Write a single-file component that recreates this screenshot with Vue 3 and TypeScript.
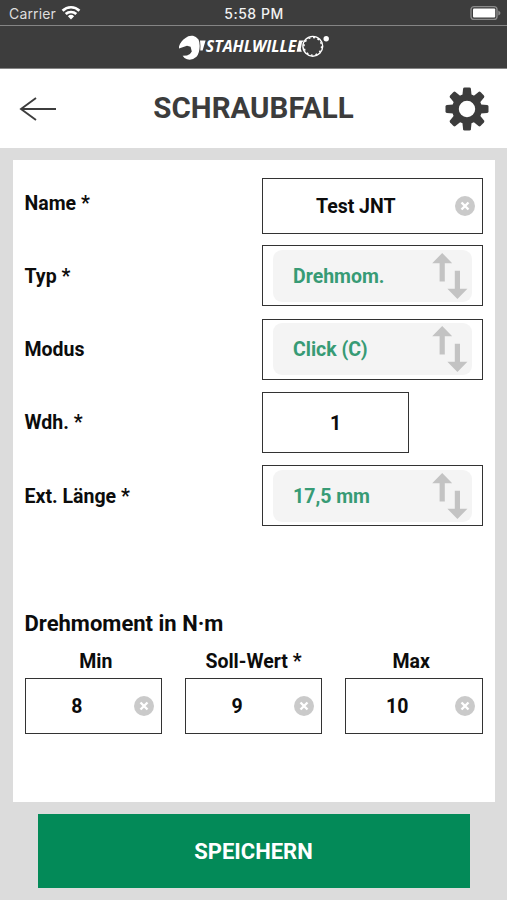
<script setup lang="ts">
interface Field {
  label: string
  value: string
  kind: 'text' | 'select' | 'short'
}

interface Limit {
  label: string
  value: string
}

const fields: Field[] = [
  { label: 'Name *', value: 'Test JNT', kind: 'text' },
  { label: 'Typ *', value: 'Drehmom.', kind: 'select' },
  { label: 'Modus', value: 'Click (C)', kind: 'select' },
  { label: 'Wdh. *', value: '1', kind: 'short' },
  { label: 'Ext. Länge *', value: '17,5 mm', kind: 'select' },
]

const limits: Limit[] = [
  { label: 'Min', value: '8' },
  { label: 'Soll-Wert *', value: '9' },
  { label: 'Max', value: '10' },
]

const teeth: number[] = [0, 45, 90, 135, 180, 225, 270, 315]
</script>

<template>
  <div class="screen">
    <div class="status">
      <div class="carrier">
        <span>Carrier</span>
        <svg class="wifi" width="20" height="16" viewBox="0 0 20 16">
          <g fill="none" stroke="#fff" stroke-width="2.7">
            <path d="M1.6 5.7a12 12 0 0 1 16.8 0" />
            <path d="M4.7 9.1a7.7 7.7 0 0 1 10.6 0" />
          </g>
          <path d="M6.9 11.3a4.5 4.5 0 0 1 6.2 0L10 14.6z" fill="#fff" />
        </svg>
      </div>
      <span class="clock">5:58 PM</span>
      <svg class="battery" width="32" height="16" viewBox="0 0 32 16">
        <rect x="1" y="1.6" width="26" height="12.8" rx="3" fill="#3d3d3d" stroke="#8a8a8a" stroke-width="1.4" />
        <rect x="3" y="3.4" width="22.2" height="9.2" rx="1" fill="#fff" />
        <path d="M28.3 5.5q2.2 1 2.2 2.5t-2.2 2.5z" fill="#8a8a8a" />
      </svg>
    </div>

    <div class="brand">
      <svg width="152" height="28" viewBox="0 0 152 28">
        <path d="M1 11.500Q3 5.500 7.500 3Q10.500 .2 15 .8Q18 1.500 20.500 4.500Q21.700 7 21.700 11Q21.600 18 18.500 21.800Q14.500 25.600 9 24.300Q6 23.300 4.600 20.800L9 20.600Q12.500 19.500 13.800 16.500L12.600 11.800L9 10.800L1 13.500z" fill="#fff" />
        <path d="M22 5.400h5.600l-3 10h-2.300q.4-5-.3-10z" fill="#fff" />
        <text class="wordmark" x="27.800" y="16.600" textLength="90.500" lengthAdjust="spacingAndGlyphs">STAHLWILLE</text>
        <path d="M121 5.400h5l-2 2.200-1.200 6.300 1 2.800h-5.200z" fill="#fff" />
        <circle cx="134.800" cy="11.300" r="9.900" fill="none" stroke="#fff" stroke-width="1.400" />
        <circle cx="134.800" cy="11.300" r="8.800" fill="none" stroke="#fff" stroke-width="1.400" stroke-dasharray="1.900 2.707" />
        <circle cx="148.200" cy="3.800" r="2.700" fill="#fff" />
      </svg>
    </div>

    <header class="header">
      <svg class="back" width="38" height="26" viewBox="0 0 38 26">
        <path d="M37 13H2M17 2L2 13l15 11" fill="none" stroke="#3d3d3d" stroke-width="1.900" />
      </svg>
      <h1 class="title">SCHRAUBFALL</h1>
      <svg class="gear" width="44" height="44" viewBox="-22 -22 44 44">
        <g fill="#3c3c3c">
          <path v-for="a in teeth" :key="a" d="M-4.600-13.500L-3.900-20.200Q-3.700-21.500-2.400-21.500H2.400Q3.700-21.500 3.900-20.200L4.600-13.500z" :transform="`rotate(${a})`" />
        </g>
        <circle r="11.600" fill="none" stroke="#3c3c3c" stroke-width="6.800" />
      </svg>
    </header>

    <main class="body">
      <section class="card">
        <div class="rows">
          <div v-for="f in fields" :key="f.label" class="row">
            <span class="label">{{ f.label }}</span>
            <div class="box" :class="f.kind">
              <div v-if="f.kind === 'select'" class="pill">
                <span class="choice">{{ f.value }}</span>
                <svg width="36" height="48" viewBox="0 0 36 48">
                  <path d="M10.200 1L20.200 11.300H12.800V29.500H7.600V11.300H.2zM25.400 47L35.400 36.700H28V18.800H22.800V36.700H15.400z" fill="#c3c3c3" />
                </svg>
              </div>
              <template v-else>
                <span class="value">{{ f.value }}</span>
                <svg v-if="f.kind === 'text'" width="20" height="20" viewBox="0 0 20 20">
                  <circle cx="10" cy="10" r="10" fill="#cacaca" />
                  <path d="M6.500 6.500l7 7m0-7l-7 7" stroke="#fff" stroke-width="2.400" />
                </svg>
              </template>
            </div>
          </div>
        </div>

        <h2 class="subtitle">Drehmoment in N·m</h2>
        <div class="captions">
          <span v-for="l in limits" :key="l.label">{{ l.label }}</span>
        </div>
        <div class="limits">
          <div v-for="l in limits" :key="l.label" class="box text">
            <span class="value">{{ l.value }}</span>
            <svg width="20" height="20" viewBox="0 0 20 20">
              <circle cx="10" cy="10" r="10" fill="#cacaca" />
              <path d="M6.500 6.500l7 7m0-7l-7 7" stroke="#fff" stroke-width="2.400" />
            </svg>
          </div>
        </div>
      </section>
      <button class="save" type="button">SPEICHERN</button>
    </main>
  </div>
</template>

<style>
body {
  margin: 0;
}
</style>

<style scoped>
.screen {
  box-sizing: border-box;
  width: 507px;
  height: 900px;
  display: flex;
  flex-direction: column;
  overflow: hidden;
  background: #dcdcdc;
  color: #0c0c0c;
  font-family: Roboto, sans-serif;
  font-weight: 700;
}
.screen svg {
  display: block;
  flex: none;
}
.status {
  box-sizing: border-box;
  height: 26px;
  display: grid;
  grid-template-columns: 1fr auto 1fr;
  align-items: center;
  padding: 1px 5px 0 9px;
  background: #3d3d3d;
  border-bottom: 1px solid #858585;
  color: #f2f2f2;
  font-family: Inter, sans-serif;
  font-size: 14px;
  font-weight: 400;
}
.carrier {
  display: flex;
  align-items: center;
  gap: 5px;
  color: #dedede;
  letter-spacing: 0.15px;
}
.clock {
  font-weight: 500;
  letter-spacing: 0.5px;
  padding-right: 3px;
}
.battery {
  justify-self: end;
}
.brand {
  box-sizing: border-box;
  height: 43px;
  padding: 9px 0 0 178px;
  background: #3d3d3d;
  border-bottom: 1px solid #858585;
}
.wordmark {
  fill: #fff;
  font-family: "Open Sans", sans-serif;
  font-size: 15.5px;
  font-style: italic;
  font-weight: 700;
}
.header {
  box-sizing: border-box;
  height: 79px;
  display: flex;
  align-items: center;
  justify-content: space-between;
  padding: 1px 18px 0 19px;
  background: #fff;
}
.title {
  margin: 0 0 0 5px;
  color: #3c3c3c;
  font-size: 29.5px;
  line-height: 34px;
  padding-bottom: 2px;
}
.body {
  flex: 1;
  display: flex;
  flex-direction: column;
  align-items: center;
  padding-top: 12px;
}
.card {
  box-sizing: border-box;
  width: 482px;
  height: 642px;
  padding: 12px 12px 0;
  background: #fff;
}
.rows {
  display: flex;
  flex-direction: column;
  gap: 12.3px;
}
.row {
  height: 61px;
  display: flex;
  align-items: center;
}
.label {
  flex: none;
  width: 237.5px;
  padding-top: 2px;
  font-size: 19.5px;
  line-height: 24px;
}
.box {
  box-sizing: border-box;
  flex: none;
  width: 220.5px;
  height: 61px;
  display: flex;
  align-items: center;
  border: 1.5px solid #333;
}
.box.short {
  width: 147px;
}
.box.text {
  height: 56px;
  padding-right: 7px;
}
.row .box.text {
  margin-top: 6px;
}
.value {
  flex: 1;
  padding-top: 2.5px;
  text-align: center;
  font-size: 19.5px;
  line-height: 24px;
}
.box.text .value {
  margin-right: 6px;
}
.pill {
  flex: 1;
  height: 52px;
  display: flex;
  align-items: center;
  justify-content: space-between;
  margin: 0 10px;
  padding: 0 4px 0 20px;
  border-radius: 9px;
  background: #f4f4f4;
  color: #379b75;
  font-size: 19.5px;
}
.choice {
  padding-top: 2.2px;
  line-height: 24px;
}
.subtitle {
  margin: 84px 0 0;
  font-size: 22px;
  line-height: 28px;
}
.captions {
  display: grid;
  grid-template-columns: repeat(3, 1fr);
  margin: 12px -7.5px 4px;
  text-align: center;
  font-size: 19.5px;
  line-height: 24px;
}
.limits {
  display: grid;
  grid-template-columns: repeat(3, 137.5px);
  justify-content: space-between;
}
.limits .box {
  width: 100%;
}
.save {
  width: 432px;
  height: 74px;
  margin-top: 12px;
  padding: 0;
  border: 0;
  background: #038a58;
  color: #fff;
  font: 700 22px Roboto, sans-serif;
}
</style>
